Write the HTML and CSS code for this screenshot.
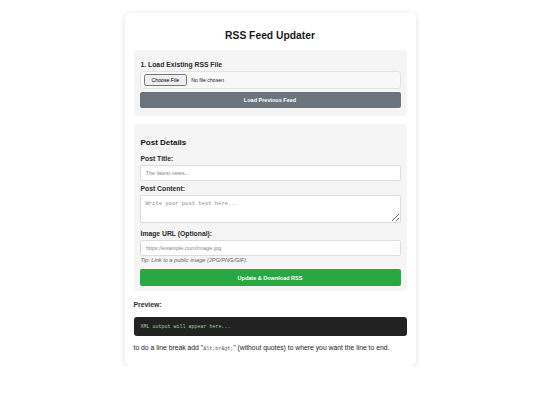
FILE: index.html
```html
<!DOCTYPE html>
<html>
<head>
<meta charset="utf-8">
<title>RSS Feed Updater</title>
<link rel="stylesheet" href="styles.css">
</head>
<body>
<div class="container">
  <h1 class="title">RSS Feed Updater</h1>
  <div class="section load">
    <label class="label">1. Load Existing RSS File</label>
    <div class="filebox"><input class="file" type="file"></div>
    <button class="btn btn-gray">Load Previous Feed</button>
  </div>
  <div class="section details">
    <h2 class="heading">Post Details</h2>
    <label class="label">Post Title:</label>
    <input class="field" type="text" placeholder="The latest news...">
    <label class="label">Post Content:</label>
    <textarea class="field area" placeholder="Write your post text here..."></textarea>
    <label class="label">Image URL (Optional):</label>
    <input class="field" type="text" placeholder="https://example.com/image.jpg">
    <div class="tip">Tip: Link to a public image (JPG/PNG/GIF).</div>
    <button class="btn btn-green">Update &amp; Download RSS</button>
  </div>
  <div class="label preview-label">Preview:</div>
  <pre class="output">XML output will appear here...</pre>
  <p class="note">to do a line break add "<code class="code">&amp;lt;br&amp;gt;</code>" (without quotes) to where you want the line to end.</p>
</div>
</body>
</html>
```
FILE: styles.css
```css
* { box-sizing: border-box; }
body {
  margin: 0;
  background: #ffffff;
  font-family: "Liberation Sans", Arial, sans-serif;
  color: #222;
}
.container {
  width: 291px;
  margin: 13px auto 0;
  padding: 9px 9px 8px;
  background: #fff;
  border-radius: 5px;
  box-shadow: 0 1px 6px rgba(0, 0, 0, 0.13);
}
.title {
  margin: 7px 0 7px;
  font-size: 10.3px;
  line-height: 14px;
  text-align: center;
  font-weight: bold;
  color: #1a1a1a;
}
.section {
  background: #f4f5f4;
  border-radius: 4px;
  padding: 10px 6px 8px;
  display: flex;
  flex-direction: column;
}
.details {
  margin-top: 8px;
  padding: 10px 6px 5px;
}
.label {
  display: block;
  font-size: 6.8px;
  line-height: 9px;
  font-weight: bold;
  color: #2a2a2a;
  padding-left: 1px;
}
.load .label { margin-bottom: 2px; }
.filebox {
  height: 18px;
  border: 1px solid #e2e4e2;
  border-radius: 3px;
  background: #f7f8f7;
  display: flex;
  align-items: center;
  padding: 0 3px;
}
.file {
  font-size: 5.2px;
  font-family: "Liberation Sans", Arial, sans-serif;
}
.btn {
  display: block;
  width: 100%;
  border: none;
  border-radius: 2px;
  color: #fff;
  font-family: "Liberation Sans", Arial, sans-serif;
  font-weight: bold;
  font-size: 5.5px;
}
.btn-gray {
  margin-top: 3px;
  height: 16px;
  background: #6c757d;
}
.btn-green {
  margin-top: 5px;
  height: 17px;
  background: #28a745;
}
.heading {
  margin: 3px 0 6px;
  font-size: 8px;
  line-height: 11px;
  font-weight: bold;
  color: #111;
  padding-left: 1px;
}
.field {
  display: block;
  width: 100%;
  height: 16px;
  margin: 2px 0 0;
  border: 1px solid #dcdcdc;
  border-radius: 2px;
  background: #fff;
  padding: 0 5px;
  font-family: "Liberation Sans", Arial, sans-serif;
  font-size: 5.6px;
}
.field::placeholder { color: #8a8a8a; }
.field + .label { margin-top: 3px; }
.area {
  height: 28px;
  padding: 4px 5px;
  font-family: "Liberation Mono", "Courier New", monospace;
  font-size: 5.5px;
  resize: vertical;
}
.area + .label { margin-top: 6px; }
.tip {
  margin-top: 1px;
  font-size: 5.6px;
  line-height: 7px;
  font-style: italic;
  color: #666;
  padding-left: 1px;
}
.preview-label {
  margin-top: 9px;
  padding-left: 0;
}
.output {
  margin: 8px 0 0;
  height: 19px;
  background: #222;
  border-radius: 3px;
  padding: 0 7px;
  display: flex;
  align-items: center;
  color: #9bd89b;
  font-family: "Liberation Mono", "Courier New", monospace;
  font-size: 5px;
}
.note {
  margin: 8px 0 5px;
  font-size: 6.8px;
  line-height: 8px;
  color: #222;
}
.code {
  font-family: "Liberation Mono", "Courier New", monospace;
  font-size: 5px;
  color: #555;
}
```
